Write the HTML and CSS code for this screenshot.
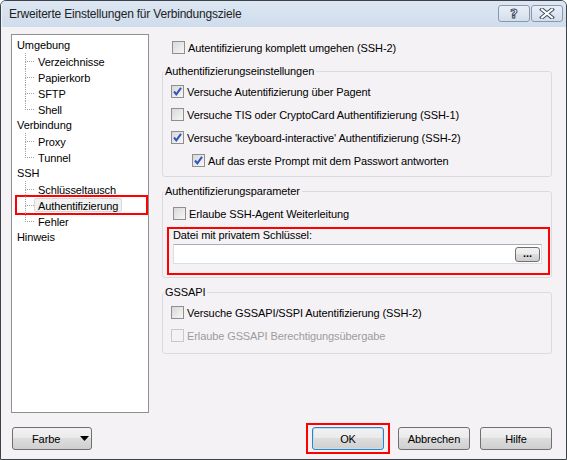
FILE: index.html
```html
<!DOCTYPE html>
<html lang="de">
<head>
    <meta charset="UTF-8">
    <title>Erweiterte Einstellungen für Verbindungsziele</title>
    <link rel="stylesheet" href="styles.css">
</head>
<body>
    <div class="window">
        <div class="titlebar">
            <span class="title">Erweiterte Einstellungen für Verbindungsziele</span>
            <div class="caption-buttons">
                <span class="cap-btn help">?</span>
                <span class="cap-btn">
                    <svg width="16" height="11" viewBox="0 0 16 11">
                        <path d="M3 1.5 L13 9.5 M13 1.5 L3 9.5" stroke="#3c4a5c" stroke-width="4" stroke-linecap="square"/>
                        <path d="M3 1.5 L13 9.5 M13 1.5 L3 9.5" stroke="#ffffff" stroke-width="2" stroke-linecap="square"/>
                    </svg>
                </span>
            </div>
        </div>

        <div class="body">
            <div class="main">
                <ul class="tree">
                    <li class="node">Umgebung</li>
                    <li class="child"><span class="branch"><i></i><i></i></span><span class="label">Verzeichnisse</span></li>
                    <li class="child"><span class="branch"><i></i><i></i></span><span class="label">Papierkorb</span></li>
                    <li class="child"><span class="branch"><i></i><i></i></span><span class="label">SFTP</span></li>
                    <li class="child last"><span class="branch"><i></i><i></i></span><span class="label">Shell</span></li>
                    <li class="node">Verbindung</li>
                    <li class="child"><span class="branch"><i></i><i></i></span><span class="label">Proxy</span></li>
                    <li class="child last"><span class="branch"><i></i><i></i></span><span class="label">Tunnel</span></li>
                    <li class="node">SSH</li>
                    <li class="child"><span class="branch"><i></i><i></i></span><span class="label">Schlüsseltausch</span></li>
                    <li class="child marked"><span class="branch"><i></i><i></i></span><span class="label selected">Authentifizierung</span></li>
                    <li class="child last"><span class="branch"><i></i><i></i></span><span class="label">Fehler</span></li>
                    <li class="node">Hinweis</li>
                </ul>

                <div class="settings">
                    <div class="row">
                        <span class="cb"></span>Autentifizierung komplett umgehen (SSH-2)
                    </div>

                    <fieldset class="group">
                        <legend>Authentifizierungseinstellungen</legend>
                        <div class="row">
                            <span class="cb checked"><svg width="11" height="11" viewBox="0 0 11 11"><path d="M2 5.5 L4.3 8.3 L9 1.8" fill="none" stroke="#2f56b8" stroke-width="2"/></svg></span>Versuche Autentifizierung über Pagent
                        </div>
                        <div class="row">
                            <span class="cb"></span>Versuche TIS oder CryptoCard Authentifizierung (SSH-1)
                        </div>
                        <div class="row">
                            <span class="cb checked"><svg width="11" height="11" viewBox="0 0 11 11"><path d="M2 5.5 L4.3 8.3 L9 1.8" fill="none" stroke="#2f56b8" stroke-width="2"/></svg></span>Versuche 'keyboard-interactive' Authentifizierung (SSH-2)
                        </div>
                        <div class="row sub">
                            <span class="cb checked"><svg width="11" height="11" viewBox="0 0 11 11"><path d="M2 5.5 L4.3 8.3 L9 1.8" fill="none" stroke="#2f56b8" stroke-width="2"/></svg></span>Auf das erste Prompt mit dem Passwort antworten
                        </div>
                    </fieldset>

                    <fieldset class="group params">
                        <legend>Authentifizierungsparameter</legend>
                        <div class="row">
                            <span class="cb"></span>Erlaube SSH-Agent Weiterleitung
                        </div>
                        <div class="keyfile">
                            <div class="keyfile-label">Datei mit privatem Schlüssel:</div>
                            <div class="textbox">
                                <span class="browse">...</span>
                            </div>
                        </div>
                    </fieldset>

                    <fieldset class="group gss">
                        <legend>GSSAPI</legend>
                        <div class="row">
                            <span class="cb"></span>Versuche GSSAPI/SSPI Autentifizierung (SSH-2)
                        </div>
                        <div class="row disabled">
                            <span class="cb"></span>Erlaube GSSAPI Berechtigungsübergabe
                        </div>
                    </fieldset>
                </div>
            </div>

            <div class="footer">
                <span class="btn farbe">Farbe <svg width="9" height="5" viewBox="0 0 9 5"><path d="M0 0 H9 L4.5 5 Z" fill="#000"/></svg></span>
                <div class="actions">
                    <div class="marked-btn"><span class="btn default">OK</span></div>
                    <span class="btn cancel">Abbrechen</span>
                    <span class="btn help-btn">Hilfe</span>
                </div>
            </div>
        </div>
    </div>
</body>
</html>
```

FILE: styles.css
```css
html, body {
    margin: 0;
    padding: 0;
    background: #ffffff;
}
body {
    font-family: 'Liberation Sans', Arial, sans-serif;
    font-size: 11px;
    letter-spacing: -0.1px;
    color: #000;
}
.window {
    width: 567px;
    height: 460px;
    box-sizing: border-box;
    border: 1px solid #3d4148;
    border-radius: 6px 6px 0 0;
    background-color: #f5f2f5; /* fondo del diálogo */
    display: flex;
    flex-direction: column;
    overflow: hidden;
}

/* barra de título */
.titlebar {
    height: 26px;
    flex-shrink: 0;
    display: flex;
    align-items: center;
    padding-left: 7px;
    background: linear-gradient(#dde7f3, #cfdcec);
    border-left: 1px solid #eef3fa;
}
.title {
    font-size: 12px;
    letter-spacing: -0.2px;
    color: #222;
    margin-top: -1px;
}
.caption-buttons {
    margin-left: auto;
    margin-right: 3px;
    align-self: flex-start;
    margin-top: 4px;
    display: flex;
    gap: 1px;
}
.cap-btn {
    width: 32px;
    height: 17px;
    box-sizing: border-box;
    border: 1px solid #8a98ab;
    border-radius: 3px;
    background: linear-gradient(#e9eff7, #d3deec);
    display: flex;
    align-items: center;
    justify-content: center;
}
.cap-btn.help {
    font-family: 'DejaVu Sans', sans-serif;
    font-weight: bold;
    font-size: 13px;
    color: #fff;
    -webkit-text-stroke: 1px #3c4a5c;
    line-height: 15px;
}

.body {
    flex: 1;
    display: flex;
    flex-direction: column;
    padding: 7px 14px 0 10px;
}
.main {
    display: flex;
    height: 379px;
}

/* árbol de navegación */
.tree {
    list-style: none;
    margin: 0;
    padding: 2px 0 0 5px;
    width: 138px;
    box-sizing: border-box;
    border: 1px solid #8e9092;
    background: #fff;
}
.tree li {
    height: 16px;
    line-height: 16px;
    white-space: nowrap;
}
.tree .child {
    display: flex;
    padding-left: 8px;
}
.branch {
    width: 9px;
    height: 16px;
    display: flex;
    flex-direction: column;
}
.branch i {
    display: block;
    box-sizing: border-box;
    border-left: 1px dotted #a0a0a0;
}
.branch i:first-child {
    height: 9px;
    border-bottom: 1px dotted #a0a0a0;
}
.branch i:last-child {
    height: 7px;
}
.child.last .branch i:last-child {
    border-left: none;
}
.label {
    display: block;
    height: 14px;
    line-height: 14px;
    margin-top: 1px;
    padding: 0 3px;
    border: 1px solid transparent;
    box-sizing: border-box;
}
.label.selected {
    background: #f1f1f1;
    border-color: #d9d9d9;
    border-radius: 2px;
}
.tree .marked {
    margin: -2px 0 -2px -2px;
    border: 2px solid #ff0000;
}

/* panel derecho */
.settings {
    margin-left: 13px;
    width: 390px;
    padding-top: 2px;
}
.row {
    height: 23px;
    display: flex;
    align-items: center;
    padding-left: 10px;
    white-space: nowrap;
}
.row.sub {
    padding-left: 30px;
}
.row.disabled {
    color: #9c9c9c;
}
.cb {
    width: 13px;
    height: 13px;
    box-sizing: border-box;
    border: 1px solid #8e8f8f;
    background: linear-gradient(135deg, #d8d8d8, #f7f7f7);
    margin-right: 3px;
    display: flex;
    align-items: center;
    justify-content: center;
}
.disabled .cb {
    border-color: #c9c9c9;
    background: #f5f2f5;
}
.group {
    margin: 5px 0 0 0;
    padding: 2px 0 4px 0;
    border: 1px solid #d8dce1;
    border-radius: 3px;
    min-width: 0;
}
.group legend {
    padding: 0 2px 0 1px;
    margin-left: 1px;
    line-height: 14px;
}
.group .row {
    padding-left: 8px;
}
.group .row.sub {
    padding-left: 29px;
}
.params {
    margin-top: 7px;
    padding-top: 4px;
    padding-bottom: 2px;
}
.params .row {
    padding-left: 10px;
}
.gss {
    margin-top: 7px;
    padding-bottom: 6px;
}

/* campo de archivo */
.keyfile {
    margin: 2px 1px 0 4px;
    border: 2px solid #ff0000;
    padding: 0 6px 9px 4px;
}
.keyfile-label {
    line-height: 13px;
    padding-bottom: 2px;
}
.textbox {
    height: 20px;
    box-sizing: border-box;
    background: #fff;
    border: 1px solid #dadde2;
    border-top-color: #abadb3;
    display: flex;
    align-items: center;
    justify-content: flex-end;
    padding-right: 1px;
}
.browse {
    width: 25px;
    height: 15px;
    box-sizing: border-box;
    border: 1px solid #707070;
    border-radius: 3px;
    background: linear-gradient(#f2f2f2 0%, #ebebeb 45%, #dddddd 50%, #cfcfcf 100%);
    text-align: center;
    line-height: 10px;
    font-weight: bold;
}

/* botones inferiores */
.footer {
    margin-top: 10px;
    display: flex;
    align-items: center;
    justify-content: space-between;
    padding-left: 1px;
}
.actions {
    display: flex;
    align-items: center;
}
.btn {
    width: 72px;
    height: 23px;
    box-sizing: border-box;
    border: 1px solid #707070;
    border-radius: 3px;
    background: linear-gradient(#f2f2f2 0%, #ebebeb 45%, #dddddd 50%, #cfcfcf 100%);
    display: flex;
    align-items: center;
    justify-content: center;
}
.btn.farbe {
    width: 80px;
    justify-content: flex-start;
    padding-left: 19px;
    gap: 20px;
}
.btn.default {
    border-color: #3c7fb1;
    box-shadow: inset 0 0 0 1px #b9e4f8;
}
.marked-btn {
    border: 2px solid #ff0000;
    padding: 2px 4px;
}
.btn.cancel {
    margin-left: 8px;
}
.btn.help-btn {
    margin-left: 10px;
}
```
